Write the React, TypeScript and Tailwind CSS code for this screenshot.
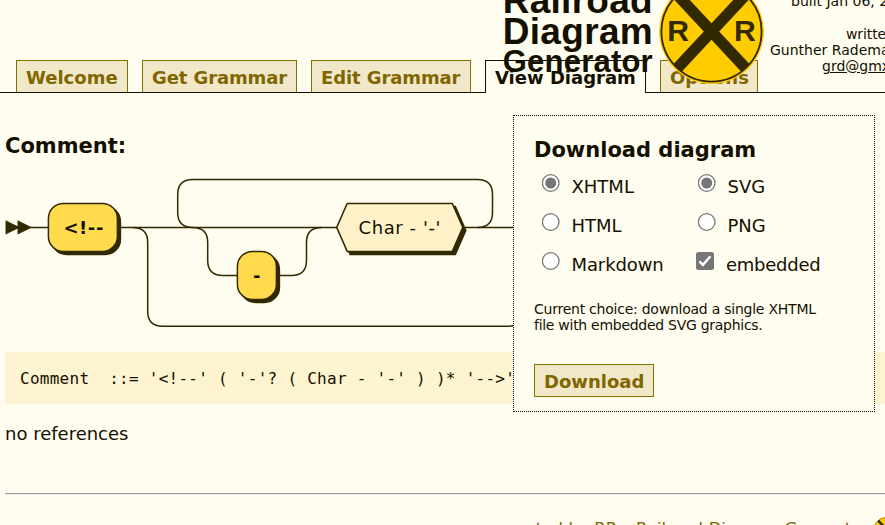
import React from "react";

const SANS = "font-['DejaVu_Sans',Verdana,sans-serif]";

function Crossbuck({ className }: { className: string }) {
  return (
    <svg className={className} viewBox="-52.3 -52.3 104.6 104.6">
      <circle r="52.2" fill="#FFCC00" />
      <circle r="49.9" fill="none" stroke="#332900" strokeWidth="1.8" />
      <g fill="#332900">
        <rect x="-49.5" y="-5.6" width="99" height="11.2" transform="rotate(47)" />
        <rect x="-49.5" y="-5.6" width="99" height="11.2" transform="rotate(-47)" />
      </g>
      <g fill="#332900" fontFamily="Liberation Sans, Arial, sans-serif" fontWeight="700" fontSize="30">
        <text x="-44.1" y="9.8">R</text>
        <text x="22.3" y="9.8">R</text>
      </g>
    </svg>
  );
}

function Tab({ label, active, className }: { label: string; active?: boolean; className: string }) {
  const tone = active
    ? "border-b-0 border-[#141000] bg-[#FFFDF0] text-[#141000]"
    : "border-x-[#807000] border-t-[#807000] border-b-[#141000] bg-[#F0E8C8] text-[#806600]";
  return (
    <div className={`h-[33px] shrink-0 border pl-[9px] text-lg font-bold leading-[33px] whitespace-nowrap ${tone} ${className}`}>
      {label}
    </div>
  );
}

function Gap({ className }: { className: string }) {
  return <div className={`h-[33px] border-b border-[#141000] ${className}`} />;
}

function Radio({ on }: { on?: boolean }) {
  return (
    <svg className="h-[18px] w-[18px] shrink-0" viewBox="0 0 18 18">
      <circle cx="8.7" cy="9" r="8.3" fill="#fff" stroke="#767676" strokeWidth="1.3" />
      {on && <circle cx="8.7" cy="9" r="5.5" fill="#767676" />}
    </svg>
  );
}

function Check() {
  return (
    <svg className="h-[18px] w-[18px] shrink-0" viewBox="0 0 18 18">
      <rect width="18" height="18" rx="2.5" fill="#767676" />
      <path d="M3.4 9.3 L6.9 12.8 L14.4 4.2" fill="none" stroke="#fff" strokeWidth="2.5" />
    </svg>
  );
}

function RailroadDiagram() {
  return (
    <svg className="block h-[180px] w-[885px]" viewBox="0 170 885 180">
      <g fill="none" stroke="#332900" strokeWidth="1.5">
        <path d="M30 227.4 H48 M120 227.4 H337 M464 227.4 H540" />
        <path d="M192.7 227.4 Q177.7 227.4 177.7 212.4 V194.4 Q177.7 179.4 192.7 179.4 H477.5 Q492.5 179.4 492.5 194.4 V212.4 Q492.5 227.4 477.5 227.4" />
        <path d="M192.7 227.4 Q207.7 227.4 207.7 242.4 V260.4 Q207.7 275.4 222.7 275.4 H238 M279 275.4 H291.5 Q306.5 275.4 306.5 260.4 V242.4 Q306.5 227.4 321.5 227.4" />
        <path d="M132.7 227.4 Q147.7 227.4 147.7 242.4 V311.3 Q147.7 326.3 162.7 326.3 H507.5 Q522.5 326.3 522.5 311.3" />
      </g>
      <g stroke="#332900" strokeWidth="1.5">
        <path d="M18.3 227.4 L6.3 221.4 V233.4 Z M30.3 227.4 L18.3 221.4 V233.4 Z" fill="#332900" />
        <rect x="51.4" y="206.4" width="69" height="48" rx="15" fill="#332900" />
        <rect x="48.4" y="203.4" width="69" height="48" rx="15" fill="#FFDB4D" />
        <rect x="240.4" y="254.4" width="39" height="48" rx="15" fill="#332900" />
        <rect x="237.4" y="251.4" width="39" height="48" rx="15" fill="#FFDB4D" />
        <path d="M339.7 230.4 L350.2 206.4 H455.3 L465.8 230.4 L455.3 254.4 H350.2 Z" fill="#332900" />
        <path d="M336.7 227.4 L347.2 203.4 H452.3 L462.8 227.4 L452.3 251.4 H347.2 Z" fill="#FFF2C9" />
      </g>
      <g fill="#141000" fontFamily="DejaVu Sans, Verdana, sans-serif" fontSize="18">
        <text x="63.4" y="234" fontWeight="700" textLength="40" lengthAdjust="spacing">{"<!--"}</text>
        <text x="252.9" y="281.5" fontWeight="700">-</text>
        <text x="358.5" y="234" textLength="82" lengthAdjust="spacing">Char - '-'</text>
      </g>
    </svg>
  );
}

function Option({ label, children, className = "" }: { label: string; children: React.ReactNode; className?: string }) {
  return (
    <div className={`flex h-[39px] items-start gap-3 whitespace-nowrap text-lg leading-[26px] ${className}`}>
      {children}
      <span>{label}</span>
    </div>
  );
}

function DownloadPanel() {
  return (
    <div className="absolute left-[513px] top-[115px] h-[297px] w-[362px] border border-dotted border-[#141000] bg-[#FFFDF0] pl-5">
      <h2 className="mt-[21px] text-[21px] font-bold leading-[27px]">Download diagram</h2>
      <div className="mt-[10px] grid grid-cols-[156px_1fr] pl-[7.5px]">
        <Option label="XHTML"><Radio on /></Option>
        <Option label="SVG"><Radio on /></Option>
        <Option label="HTML"><Radio /></Option>
        <Option label="PNG"><Radio /></Option>
        <Option label="Markdown" className="tracking-[-0.1px]"><Radio /></Option>
        <Option label="embedded" className="-ml-[1.5px] tracking-[-0.25px]"><Check /></Option>
      </div>
      <p className="mt-[10px] text-sm leading-4 tracking-[-0.24px]">
        Current choice: download a single XHTML
        <br />
        <span className="tracking-[-0.28px]">file with embedded SVG graphics.</span>
      </p>
      <button className="mt-[31px] block h-[33px] w-[120px] border border-[#807000] bg-[#F0E8C8] pl-[9px] text-left text-lg font-bold leading-[33px] text-[#806600]">
        Download
      </button>
    </div>
  );
}

function Header() {
  return (
    <div className="absolute right-0 top-0 flex h-[90px] w-[385px] overflow-hidden">
      <svg className="h-[90px] w-[159px] shrink-0" viewBox="500 0 159 90">
        <g fill="#141000" fontFamily="Liberation Sans, Arial, sans-serif" fontWeight="700">
          <text x="502.7" y="13" fontSize="37" textLength="150">Railroad</text>
          <text x="502.7" y="44" fontSize="37" textLength="150">Diagram</text>
          <text x="502.7" y="71.5" fontSize="31" textLength="150">Generator</text>
        </g>
      </svg>
      <Crossbuck className="-mt-[21px] h-[105px] w-[105px] shrink-0" />
      <div className="-mt-[7px] pl-[6px] text-sm leading-4 whitespace-nowrap">
        <div className="pl-[21px]">built Jan 06, 2024</div>
        <div className="h-[17px]" />
        <div className="pl-[76px] tracking-[-0.1px]">written by</div>
        <div>Gunther Rademacher</div>
        <div className="pl-[52px] underline">grd@gmx.net</div>
      </div>
    </div>
  );
}

export default function App() {
  return (
    <div className={`relative h-[525px] w-[885px] overflow-hidden bg-[#FFFDF0] text-[#141000] ${SANS}`}>
      <nav className="flex pt-[60px]">
        <Gap className="w-4" />
        <Tab label="Welcome" className="w-[112px]" />
        <Gap className="w-[14px]" />
        <Tab label="Get Grammar" className="w-[155px] tracking-[-0.1px]" />
        <Gap className="w-[14px]" />
        <Tab label="Edit Grammar" className="w-[160px] tracking-[-0.1px]" />
        <Gap className="w-[14px]" />
        <Tab label="View Diagram" active className="w-[161px]" />
        <Gap className="w-[14px]" />
        <Tab label="Options" className="w-[98px]" />
        <Gap className="flex-1" />
      </nav>
      <main>
        <h2 className="h-[77px] pl-[5px] pt-10 text-[21px] font-bold leading-[27px]">Comment:</h2>
        <RailroadDiagram />
        <pre className="ml-[5px] mt-[2px] h-[52px] bg-[#FFF4D1] pl-[15px] font-['DejaVu_Sans_Mono',monospace] text-base leading-[53px] tracking-[0.27px]">
          {"Comment  ::= '<!--' ( '-'? ( Char - '-' ) )* '-->'"}
        </pre>
        <p className="mt-[19px] pl-[5px] text-lg leading-[22px]">no references</p>
      </main>
      <footer className="mt-[48px]">
        <div className="ml-[5px] h-0.5 border-t border-[#9A9A9A] bg-[#EEEEEE]" />
        <div className="mt-[22px] flex justify-end whitespace-nowrap text-[16.4px] leading-5 text-[#806600]">
          <span className="pt-[2px] [word-spacing:0.5px]">
            generated by RR <span className="mr-[1px] ml-[0.5px]">-</span> Railroad Diagram Generator
          </span>
          <Crossbuck className="-mr-[13px] ml-[6px] h-6 w-6 shrink-0" />
        </div>
      </footer>
      <DownloadPanel />
      <Header />
    </div>
  );
}
